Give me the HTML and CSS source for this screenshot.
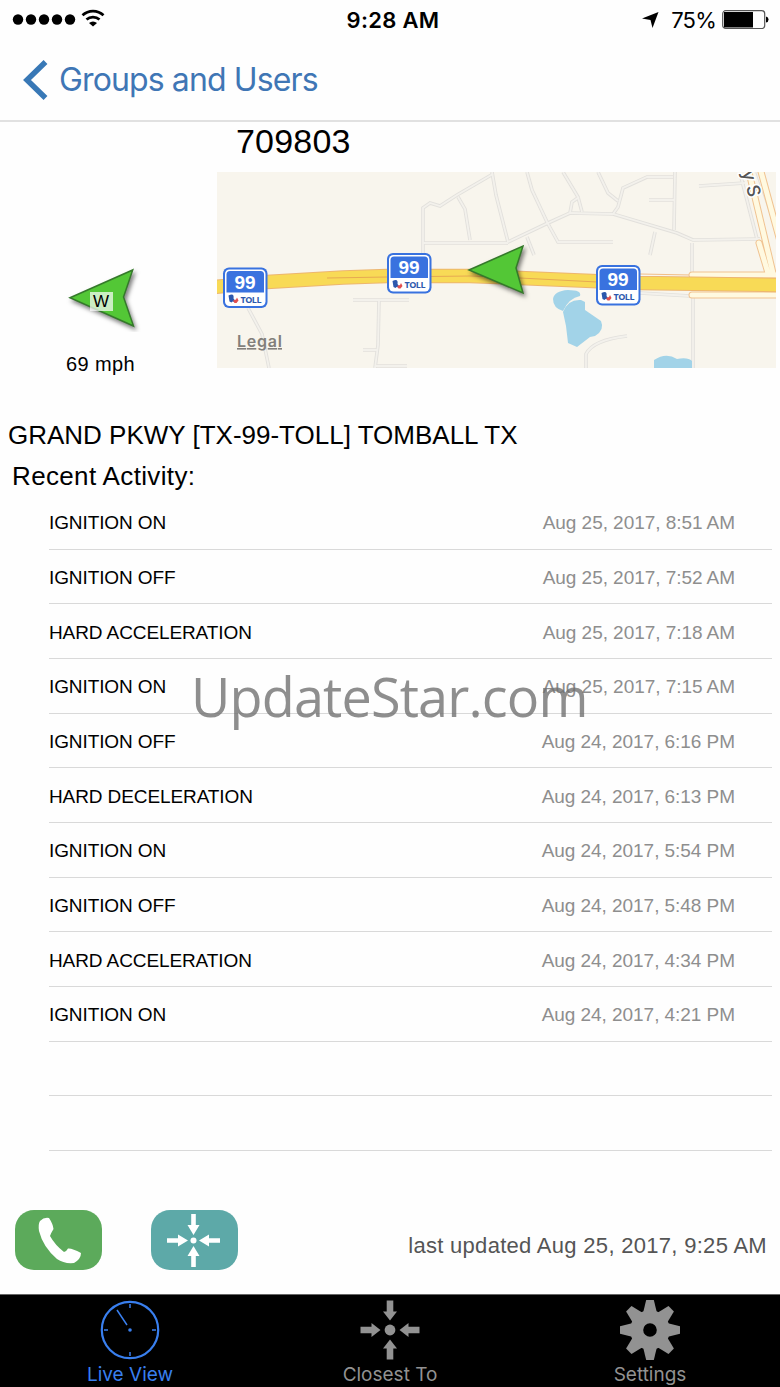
FILE: index.html
```html
<!DOCTYPE html>
<html lang="en">
<head>
    <meta charset="UTF-8">
    <meta name="viewport" content="width=device-width, initial-scale=1.0">
    <title>Live View</title>
    <link rel="stylesheet" href="styles.css">
</head>
<body>
    <div class="phone">
        <!-- Status bar -->
        <header class="status">
            <div class="status-left">
                <svg width="94" height="22" viewBox="0 0 94 22">
                    <circle cx="6" cy="12.500" r="5.2"/>
                    <circle cx="19" cy="12.500" r="5.2"/>
                    <circle cx="32" cy="12.500" r="5.2"/>
                    <circle cx="45" cy="12.500" r="5.2"/>
                    <circle cx="58" cy="12.500" r="5.2"/>
                    <path d="M70.500 8.300a15.300 15.300 0 0 1 21 0M74.500 12.600a9.500 9.500 0 0 1 13 0" fill="none" stroke="#000" stroke-width="2.700"/>
                    <path d="M77 16a6 6 0 0 1 8 0L81 19.500z"/>
                </svg>
            </div>
            <div class="status-time">9:28 AM</div>
            <div class="status-right">
                <svg width="17" height="17" viewBox="0 0 17 17"><path d="M16.500 0L10.500 16 8.500 8 0 6.500z"/></svg>
                <span class="percent">75%</span>
                <svg width="47" height="20" viewBox="0 0 47 20">
                    <rect x=".7" y=".7" width="42" height="17.800" rx="3" fill="none" stroke="#555" stroke-width="1.200"/>
                    <path d="M2 2h29v15.500H2z"/>
                    <path d="M44 6.500q2.500.5 2.500 3t-2.500 3z"/>
                </svg>
            </div>
        </header>

        <nav class="nav">
            <svg width="25" height="40" viewBox="0 0 25 40"><path d="M22.500 2L4 20l18.500 18" fill="none" stroke="#3878b6" stroke-width="5.500"/></svg>
            <a class="back" href="#">Groups and Users</a>
        </nav>

        <!-- Vehicle -->
        <section class="vehicle">
            <div class="heading">
                <div class="compass">
                    <svg width="76" height="68" viewBox="0 0 76 68"><path class="arrow" d="M4 33.700L66.700 6 57.500 33l10 29z"/></svg>
                    <span class="direction">W</span>
                </div>
                <div class="speed">69 mph</div>
            </div>
            <div class="position">
                <h1>709803</h1>
                <svg class="map" width="559" height="196" viewBox="0 0 559 196">
                    <defs>
                        <g id="shield">
                            <rect width="44.500" height="40.500" rx="6" fill="#3972df"/>
                            <rect x="2" y="2" width="40.500" height="36.500" rx="4.500" fill="#fff"/>
                            <path d="M3.500 25V7q0-3.500 3.500-3.500h30.500q3.500 0 3.500 3.500v18z" fill="#3972df"/>
                            <text x="22" y="21" class="shield-num" textLength="21">99</text>
                            <text x="28" y="35.200" class="shield-toll" textLength="21">TOLL</text>
                            <path d="M5.500 28q6-3 5 3l3 4-4-1-1 1-2-1z" fill="#2c58ad"/>
                            <path d="M10 33l3-1 1-2 1.500 3-2 2.500h-2z" fill="#e3504f"/>
                        </g>
                        <g id="streets">
                            <path d="M206 81V36L213 31 223 34 240 23 276 2M241 25L248 37 253 68M206 71H291"/>
                            <path d="M275 0L279 23 291 70 331 51 353 41 396 42 460 61 476 68 543 67"/>
                            <path d="M310 0L315 18 330 50 341 70H396M346 0L361 25 365 40M353 41L355 30 362 25"/>
                            <path d="M381 0L391 21 401 29M396 42L401 35 406 16 430 5H456M458 0L457 58M432 28H457M482 14L528 11"/>
                            <path d="M438 60L433 83M475 71V100M476 126V196M310 65L317 83M423 121L473 124M524 5L540 67"/>
                            <path d="M369 196V182Q376 168 410 164M136 128H192M162 128L161 173 158 196M146 178H161M158 194H190M31 136L45 162 52 196M540 0L559 56"/>
                        </g>
                        <path id="ramps" d="M475 103H562M475 123H562M531 -4L556 101M543 -4L567 84M542 71L551 101"/>
                    </defs>
                    <rect width="559" height="196" fill="#f8f5ed"/>
                    <use href="#streets" class="street-edge"/>
                    <use href="#streets" class="street-fill"/>
                    <g fill="#a2d3e8">
                        <path d="M336 127Q337 119 351 118 365 118 363 124 352 126 346 139 336 136 336 127z"/>
                        <path d="M346 140Q351 127 364 128L368 130V138L384 149Q388 158 378 164L373 165 360 175 351 171 349 154z"/>
                        <path d="M437 196V188Q449 180 460 187 471 185 475 189V196z"/>
                    </g>
                    <path d="M423 102L474 103" stroke="#f2be87" fill="none"/>
                    <use href="#ramps" class="ramp-edge"/>
                    <use href="#ramps" class="ramp-fill"/>
                    <g class="highway">
                        <path class="highway-edge" d="M-2 115L50 110 126 105.500 170 104H253L303 106 423 111 561 113"/>
                        <path class="highway-fill" d="M-2 115L50 110 126 105.500 170 104H253L303 106 423 111 561 113"/>
                        <path d="M110 106L170 105 253 104 303 106 400 111" stroke="#e7aa52" stroke-width="1"/>
                    </g>
                    <text class="road-name" transform="translate(525 0) rotate(75)">y S</text>
                    <use href="#shield" x="6" y="95.500"/>
                    <use href="#shield" x="170" y="81"/>
                    <use href="#shield" x="379" y="93"/>
                    <path class="arrow" d="M252 98L306 74 299 96 306 121z"/>
                    <text x="20" y="175" class="legal" textLength="45">Legal</text>
                </svg>
            </div>
        </section>

        <!-- Activity -->
        <h2 class="address">GRAND PKWY [TX-99-TOLL] TOMBALL TX</h2>
        <h3 class="subtitle">Recent Activity:</h3>
        <ul class="activity">
            <li><span>IGNITION ON</span><time>Aug 25, 2017, 8:51 AM</time></li>
            <li><span>IGNITION OFF</span><time>Aug 25, 2017, 7:52 AM</time></li>
            <li><span>HARD ACCELERATION</span><time>Aug 25, 2017, 7:18 AM</time></li>
            <li><span>IGNITION ON</span><time>Aug 25, 2017, 7:15 AM</time></li>
            <li><span>IGNITION OFF</span><time>Aug 24, 2017, 6:16 PM</time></li>
            <li><span>HARD DECELERATION</span><time>Aug 24, 2017, 6:13 PM</time></li>
            <li><span>IGNITION ON</span><time>Aug 24, 2017, 5:54 PM</time></li>
            <li><span>IGNITION OFF</span><time>Aug 24, 2017, 5:48 PM</time></li>
            <li><span>HARD ACCELERATION</span><time>Aug 24, 2017, 4:34 PM</time></li>
            <li><span>IGNITION ON</span><time>Aug 24, 2017, 4:21 PM</time></li>
            <li></li>
            <li></li>
        </ul>

        <section class="actions">
            <button class="action call" aria-label="Call">
                <svg width="87" height="60" viewBox="0 0 87 60"><path d="M25 11Q29 7 34 8 38 14 38.500 19 36 23 35 26 40 35 49 42 51 42 53 38.500 57 38 66 43 66 49 59 53 49 54 42 49 28 37 24 21 23 14 25 11z" fill="#fff"/></svg>
            </button>
            <button class="action locate" aria-label="Closest To">
                <svg width="87" height="60" viewBox="0 0 87 60">
                    <g fill="#fff" transform="translate(42.500 30.500)">
                        <circle r="3"/>
                        <path id="pin" d="M-2.300 -26.500h4.600v11H6L0-5.500-6-15.500h3.700z"/>
                        <use href="#pin" transform="rotate(90)"/>
                        <use href="#pin" transform="rotate(180)"/>
                        <use href="#pin" transform="rotate(270)"/>
                    </g>
                </svg>
            </button>
            <span class="updated">last updated Aug 25, 2017, 9:25 AM</span>
        </section>

        <footer class="tabs">
            <a class="tab active" href="#">
                <svg width="60" height="60" viewBox="-30 -30 60 60" fill="none" stroke="#397fee">
                    <circle r="28.200" stroke-width="2.200"/>
                    <path d="M0-26v4M0 22v4M-26 0h4M22 0h4M-13-20L-3-5" stroke-width="1.500"/>
                    <circle r="1.800" fill="#397fee" stroke="none"/>
                </svg>
                <span>Live View</span>
            </a>
            <a class="tab" href="#">
                <svg width="60" height="60" viewBox="-30 -30 60 60" fill="#929292">
                    <circle r="5.400"/>
                    <path id="point" d="M-3.300-29.500h6.600v11H7L0-9.500-7-18.500h3.700z"/>
                    <use href="#point" transform="rotate(90)"/>
                    <use href="#point" transform="rotate(180)"/>
                    <use href="#point" transform="rotate(270)"/>
                </svg>
                <span>Closest To</span>
            </a>
            <a class="tab" href="#">
                <svg width="60" height="60" viewBox="-30 -30 60 60" fill="#929292">
                    <circle r="13.300" fill="none" stroke="#929292" stroke-width="13"/>
                    <path id="tooth" d="M-3.800-30h7.600L7-17H-7z"/>
                    <use href="#tooth" transform="rotate(45)"/>
                    <use href="#tooth" transform="rotate(90)"/>
                    <use href="#tooth" transform="rotate(135)"/>
                    <use href="#tooth" transform="rotate(180)"/>
                    <use href="#tooth" transform="rotate(225)"/>
                    <use href="#tooth" transform="rotate(270)"/>
                    <use href="#tooth" transform="rotate(315)"/>
                </svg>
                <span>Settings</span>
            </a>
        </footer>

        <div class="watermark">UpdateStar.com</div>
    </div>
</body>
</html>
```
FILE: styles.css
```css
* {
    box-sizing: border-box;
}

body {
    margin: 0;
    background-color: #fefefe;
    color: #000;
    font-family: "Liberation Sans", Arial, sans-serif;
}

svg {
    display: block;
    flex-shrink: 0;
}

.phone {
    position: relative;
    width: 780px;
    height: 1387px;
    overflow: hidden;
    display: flex;
    flex-direction: column;
}

/* Status bar */
.status {
    height: 40px;
    flex-shrink: 0;
    display: grid;
    grid-template-columns: 1fr auto 1fr;
    align-items: center;
    padding: 0 11px 0 12px;
    font-family: Inter, sans-serif;
    font-size: 22px;
}

.status-left {
    padding-bottom: 5px;
}

.status-time {
    font-weight: 600;
    letter-spacing: 0.3px;
    padding-left: 5px;
}

.status-right {
    display: flex;
    justify-content: flex-end;
    align-items: center;
}

.percent {
    margin: 0 6px 0 12px;
    letter-spacing: -0.8px;
}

.nav {
    height: 82px;
    flex-shrink: 0;
    display: flex;
    align-items: center;
    gap: 11px;
    padding: 0 0 1px 23px;
    border-bottom: 2px solid #e1e1e1;
}

.back {
    color: #3f76b5;
    font-family: Inter, sans-serif;
    font-size: 32px;
    letter-spacing: -0.88px;
    text-decoration: none;
}

/* Vehicle */
.vehicle {
    height: 246px;
    flex-shrink: 0;
    display: flex;
}

.heading {
    width: 217px;
    padding: 142px 16px 0 0;
    display: flex;
    flex-direction: column;
    align-items: center;
}

.compass {
    position: relative;
    padding-left: 6px;
}

.arrow {
    fill: #53c736;
    stroke: #35792b;
    stroke-width: 1.5;
    filter: drop-shadow(2px 3px 2px rgba(0, 0, 0, 0.5));
}

.direction {
    position: absolute;
    left: 30px;
    top: 28px;
    width: 23px;
    height: 19px;
    background-color: rgba(255, 255, 255, 0.7);
    font-size: 17px;
    line-height: 19px;
    text-align: center;
}

.speed {
    margin-top: 20px;
    font-size: 20px;
    letter-spacing: 0.4px;
    line-height: 24px;
}

h1 {
    margin: 0;
    padding-left: 19px;
    height: 50px;
    font-size: 34px;
    font-weight: normal;
    letter-spacing: 0.2px;
    line-height: 39px;
}

.street-edge {
    fill: none;
    stroke: #e2e0dc;
    stroke-width: 3.6;
}

.street-fill {
    fill: none;
    stroke: #f3f1ec;
    stroke-width: 1.8;
}

.ramp-edge {
    fill: none;
    stroke: #f0c391;
    stroke-width: 7;
    stroke-linecap: round;
}

.ramp-fill {
    fill: none;
    stroke: #fff9e0;
    stroke-width: 5;
    stroke-linecap: round;
}

.highway {
    fill: none;
}

.highway-edge {
    stroke: #edb66f;
    stroke-width: 14.5;
}

.highway-fill {
    stroke: #f8da56;
    stroke-width: 12.5;
}

.shield-num {
    fill: #fff;
    font: bold 19px "Liberation Sans", Arial, sans-serif;
    text-anchor: middle;
}

.shield-toll {
    fill: #2c58ad;
    font: bold 9px "Open Sans", sans-serif;
    text-anchor: middle;
}

.road-name {
    fill: #555;
    stroke: #fff;
    stroke-width: 3;
    paint-order: stroke;
    font: 500 18px Inter, sans-serif;
}

.legal {
    fill: #827f7b;
    font: 600 16px Inter, sans-serif;
    text-decoration: underline;
}

/* Activity */
.address {
    margin: 0;
    padding: 50px 0 0 8px;
    font-size: 26px;
    font-weight: normal;
    line-height: 34px;
    white-space: nowrap;
}

.subtitle {
    margin: 0;
    padding: 7px 0 0 12px;
    font-size: 26px;
    font-weight: normal;
    letter-spacing: 0.35px;
    line-height: 34px;
}

.activity {
    list-style: none;
    margin: 2px 8px 0 49px;
    padding: 0;
}

.activity li {
    height: 54.67px;
    display: flex;
    justify-content: space-between;
    align-items: center;
    padding: 3px 37px 0 0;
    border-bottom: 1px solid #d9d9d9;
    font-size: 19px;
    letter-spacing: -0.1px;
}

.activity time {
    color: #8e8e8e;
    letter-spacing: -0.05px;
}

.actions {
    height: 142px;
    flex-shrink: 0;
    margin-top: auto;
    display: flex;
    align-items: center;
    padding: 34px 13px 0 15px;
}

.action {
    width: 87px;
    height: 60px;
    margin-right: 49px;
    padding: 0;
    border: 0;
    border-radius: 19px;
}

.call {
    background-color: #5caa5b;
}

.locate {
    background-color: #5da9a8;
}

.updated {
    margin-left: auto;
    color: #555;
    font-size: 22px;
    letter-spacing: 0.3px;
    padding-top: 11px;
    white-space: nowrap;
}

/* Tab bar */
.tabs {
    height: 93px;
    flex-shrink: 0;
    background-color: #000;
    border-top: 1px solid #666;
    display: grid;
    grid-template-columns: repeat(3, 260px);
}

.tab {
    display: flex;
    flex-direction: column;
    align-items: center;
    padding-top: 5px;
    color: #929292;
    font-family: Inter, sans-serif;
    font-size: 19px;
    line-height: 30px;
    text-decoration: none;
}

.tab.active {
    color: #397fee;
}

.watermark {
    position: absolute;
    left: 191px;
    top: 658px;
    color: rgba(110, 110, 110, 0.78);
    font-family: "Open Sans", sans-serif;
    font-size: 54px;
    line-height: 76px;
    letter-spacing: -0.85px;
}
```
